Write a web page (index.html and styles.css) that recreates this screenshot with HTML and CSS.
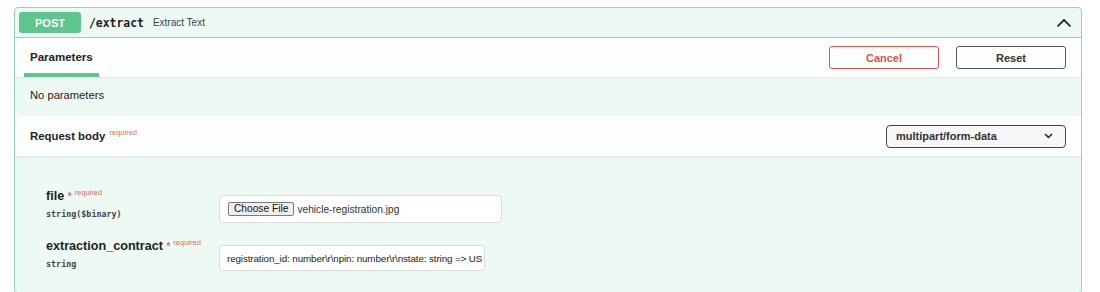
FILE: index.html
```html
<!DOCTYPE html>
<html>
  <head>
    <title>POST /extract</title>
    <link rel="stylesheet" href="styles.css">
  </head>
  <body>
    <div class="opblock">
      <div class="summary">
        <span class="method">POST</span>
        <span class="path">/extract</span>
        <span class="desc">Extract Text</span>
        <svg class="arrow" width="16" height="10" viewBox="0 0 16 10">
          <path d="M1.5 8.5 L8 2 L14.5 8.5" fill="none" stroke="#111" stroke-width="1.6"/>
        </svg>
      </div>

      <div class="section-header">
        <div class="tab">Parameters</div>
        <div class="actions">
          <button class="btn cancel" type="button">Cancel</button>
          <button class="btn reset" type="button">Reset</button>
        </div>
      </div>

      <div class="no-params">No parameters</div>

      <div class="section-header body-header">
        <div class="title">Request body <span class="req-top">required</span></div>
        <div class="select">
          <span>multipart/form-data</span>
          <svg width="9" height="6" viewBox="0 0 9 6">
            <path d="M1 1 L4.5 4.5 L8 1" fill="none" stroke="#222" stroke-width="1.5"/>
          </svg>
        </div>
      </div>

      <div class="body-params">
        <div class="param">
          <div class="param-name">
            <div class="name">file <span class="star">*</span><span class="req">required</span></div>
            <div class="type">string($binary)</div>
          </div>
          <div class="field file-field">
            <span class="choose">Choose File</span>
            <span class="file-name">vehicle-registration.jpg</span>
          </div>
        </div>
        <div class="param">
          <div class="param-name">
            <div class="name">extraction_contract <span class="star">*</span><span class="req">required</span></div>
            <div class="type">string</div>
          </div>
          <input class="field text-field" type="text" value="registration_id: number\r\npin: number\r\nstate: string => USA state code">
        </div>
      </div>
    </div>
  </body>
</html>
```

FILE: styles.css
```css
body {
  margin: 0;
  font-family: "Liberation Sans", Arial, sans-serif;
  color: #3b4151;
  background: #ffffff;
}

.opblock {
  margin: 7px 18px 0 14px;
  height: 284px;
  border: 1px solid #93d6b6;
  border-radius: 4px;
  background: #edfaf4;
}

.summary {
  display: flex;
  align-items: center;
  height: 29px;
  padding: 0 9px 0 4px;
  border-bottom: 1px solid #93d6b6;
}

.method {
  display: flex;
  align-items: center;
  justify-content: center;
  width: 62px;
  height: 21px;
  border-radius: 3px;
  background: #5fc58f;
  color: #ffffff;
  font-size: 11px;
  font-weight: bold;
}

.path {
  margin-left: 8px;
  font-family: "DejaVu Sans Mono", monospace;
  font-size: 11.4px;
  font-weight: bold;
  color: #222;
}

.desc {
  margin-left: 9px;
  font-size: 10px;
  color: #3b4151;
}

.arrow {
  margin-left: auto;
}

.section-header {
  display: flex;
  align-items: center;
  justify-content: space-between;
  height: 39px;
  padding: 0 15px 0 9px;
  background: rgba(255, 255, 255, 0.85);
  box-shadow: 0 1px 2px rgba(0, 0, 0, 0.06);
}

.tab {
  align-self: stretch;
  display: flex;
  align-items: center;
  padding: 3px 6px 0;
  border-bottom: 4px solid #5fc58f;
  font-size: 11.5px;
  font-weight: bold;
  color: #222;
}

.actions {
  display: flex;
  gap: 17px;
}

.btn {
  width: 110px;
  height: 23px;
  border-radius: 3px;
  background: transparent;
  font-family: "Liberation Sans", Arial, sans-serif;
  font-size: 11px;
  font-weight: bold;
}

.cancel {
  border: 1.5px solid #e4504c;
  color: #e4504c;
}

.reset {
  border: 1.5px solid #55585f;
  color: #333;
}

.no-params {
  display: flex;
  align-items: center;
  box-sizing: border-box;
  height: 39px;
  padding: 0 0 4px 15px;
  font-size: 11.2px;
  color: #222;
}

.body-header {
  height: 40px;
  padding-left: 15px;
  border-bottom: 1px solid #e2ede8;
}

.title {
  font-size: 11.4px;
  font-weight: bold;
  color: #222;
}

.req-top {
  position: relative;
  top: -5px;
  margin-left: 1px;
  font-size: 7.5px;
  font-weight: normal;
  color: #e56a5e;
}

.select {
  display: flex;
  align-items: center;
  justify-content: space-between;
  box-sizing: border-box;
  width: 180px;
  height: 23px;
  padding: 0 12px 0 9px;
  border: 1.5px solid #41444e;
  border-radius: 4px;
  background: #f7f7f7;
  font-size: 11px;
  font-weight: bold;
  color: #333;
}

.body-params {
  padding: 32px 0 0 31px;
}

.param {
  display: flex;
  margin-bottom: 16px;
}

.param-name {
  width: 173px;
}

.name {
  font-size: 12.6px;
  font-weight: bold;
  line-height: 15px;
  color: #222;
}

.star {
  color: #e56a5e;
  font-size: 10px;
}

.req {
  position: relative;
  top: -5px;
  margin-left: 3px;
  font-size: 7.5px;
  font-weight: normal;
  color: #e56a5e;
}

.type {
  margin-top: 3px;
  font-family: "DejaVu Sans Mono", monospace;
  font-size: 8.4px;
  font-weight: bold;
  line-height: 13px;
  color: #444;
}

.field {
  box-sizing: border-box;
  margin-top: 6px;
  border: 1px solid #dcdcdc;
  border-radius: 4px;
  background: #ffffff;
}

.file-field {
  display: flex;
  align-items: center;
  width: 283px;
  height: 28px;
  padding-left: 8px;
  font-size: 10.2px;
  color: #333;
}

.choose {
  box-sizing: border-box;
  height: 14px;
  padding: 0 5px;
  border: 1px solid #7a7a7a;
  border-radius: 2px;
  background: #efefef;
  font-size: 10.2px;
  line-height: 12px;
  color: #111;
}

.file-name {
  margin-left: 3px;
}

.text-field {
  width: 266px;
  height: 26px;
  padding: 0 2px 0 7px;
  font-family: "Liberation Sans", Arial, sans-serif;
  font-size: 9.8px;
  letter-spacing: -0.1px;
  color: #222;
  outline: none;
}
```
